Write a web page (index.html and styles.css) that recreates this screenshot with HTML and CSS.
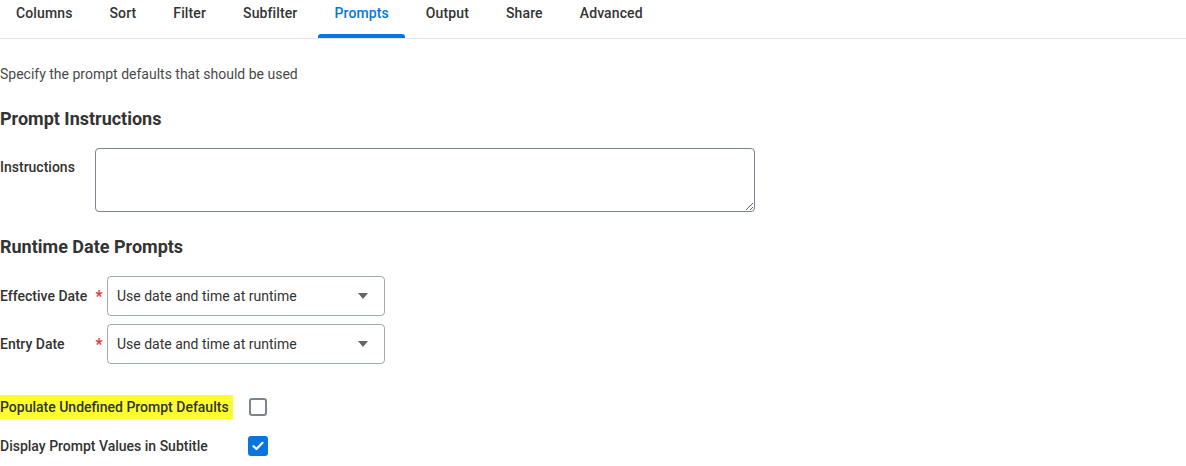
FILE: index.html
```html
<!DOCTYPE html>
<html>
<head>
    <meta charset="UTF-8">
    <meta name="viewport" content="width=device-width, initial-scale=1.0">
    <title>Report Prompts</title>
    <link rel="stylesheet" href="styles.css">
</head>
<body>
    <!-- Report definition tabs -->
    <nav class="tabs">
        <a class="tab">Columns</a>
        <a class="tab">Sort</a>
        <a class="tab">Filter</a>
        <a class="tab">Subfilter</a>
        <a class="tab active">Prompts</a>
        <a class="tab">Output</a>
        <a class="tab">Share</a>
        <a class="tab">Advanced</a>
    </nav>

    <main class="content">
        <p class="intro">Specify the prompt defaults that should be used</p>

        <h2 class="section-title">Prompt Instructions</h2>
        <div class="field-row">
            <label class="field-label" for="instructions">Instructions</label>
            <textarea id="instructions" class="text-area"></textarea>
        </div>

        <h2 class="section-title">Runtime Date Prompts</h2>
        <div class="date-grid">
            <label class="field-label">Effective Date</label>
            <span class="required">*</span>
            <div class="select-box">
                <span>Use date and time at runtime</span>
                <span class="caret"></span>
            </div>

            <label class="field-label">Entry Date</label>
            <span class="required">*</span>
            <div class="select-box">
                <span>Use date and time at runtime</span>
                <span class="caret"></span>
            </div>
        </div>

        <div class="check-list">
            <div class="check-row">
                <span class="check-label"><mark class="marker">Populate Undefined Prompt Defaults</mark></span>
                <span class="checkbox"></span>
            </div>
            <div class="check-row">
                <span class="check-label">Display Prompt Values in Subtitle</span>
                <span class="checkbox checked">
                    <svg width="12" height="10" viewBox="0 0 12 10"><path d="M1.5 5.2 L4.5 8 L10.5 1.8" fill="none" stroke="#fff" stroke-width="2.2" stroke-linecap="round" stroke-linejoin="round"/></svg>
                </span>
            </div>
        </div>
    </main>
</body>
</html>
```

FILE: styles.css
```css
body {
    font-family: Roboto, "Noto Sans", Arial, sans-serif;
    font-size: 14px;
    color: #333;
    background-color: #fff;
    margin: 0;
    padding: 0;
}

.tabs {
    display: flex;
    gap: 5px;
    border-bottom: 1px solid #e4e6e9;
}

.tab {
    position: relative;
    box-sizing: border-box;
    height: 38px;
    padding: 3px 16px 0;
    line-height: 20px;
    font-weight: 500;
    letter-spacing: 0.12px;
    color: #333;
    cursor: pointer;
}

.tab.active {
    color: #0875e1;
}

/* blue indicator under the selected tab */
.tab.active::after {
    content: "";
    position: absolute;
    left: 0;
    right: 0;
    bottom: 0;
    height: 4px;
    border-radius: 3px 3px 0 0;
    background-color: #0875e1;
}

.intro {
    margin: 25px 0 0;
    line-height: 20px;
    color: #4a4a4a;
}

.section-title {
    margin: 23px 0 17px;
    font-size: 18px;
    line-height: 24px;
    font-weight: 700;
    color: #333;
}

.field-row {
    display: flex;
}

.field-label {
    font-weight: 500;
    line-height: 20px;
    color: #333;
}

.field-row .field-label {
    width: 95px;
    padding-top: 9px;
}

.text-area {
    box-sizing: border-box;
    width: 660px;
    height: 64px;
    border: 1px solid #7b858f;
    border-radius: 4px;
    font-family: inherit;
    font-size: 14px;
    padding: 8px 10px;
}

.date-grid {
    display: grid;
    grid-template-columns: 91px 16px 278px;
    row-gap: 8px;
    align-items: center;
}

.required {
    color: #de2f2f;
    font-size: 16px;
    font-weight: 500;
    text-align: center;
}

.select-box {
    box-sizing: border-box;
    height: 40px;
    display: flex;
    align-items: center;
    justify-content: space-between;
    padding: 0 16px 0 9px;
    border: 1px solid #a0a8b0;
    border-radius: 4px;
    color: #333;
}

.caret {
    width: 0;
    height: 0;
    border-left: 5px solid transparent;
    border-right: 5px solid transparent;
    border-top: 6px solid #666;
}

.check-list {
    margin-top: 27px;
}

.check-row {
    display: flex;
    align-items: center;
    height: 32px;
}

.check-row + .check-row {
    margin-top: 7px;
}

.check-label {
    width: 248px;
    font-weight: 500;
    color: #333;
}

.marker {
    background-color: #fcff2a;
    color: #333;
    padding: 4px 4px 4px 0;
}

.checkbox {
    box-sizing: border-box;
    width: 18px;
    height: 18px;
    margin-left: 1px;
    border: 2px solid #7b858f;
    border-radius: 3px;
    display: flex;
    align-items: center;
    justify-content: center;
}

.checkbox.checked {
    width: 20px;
    height: 20px;
    margin-left: 0;
    border: none;
    background-color: #0875e1;
}
```
